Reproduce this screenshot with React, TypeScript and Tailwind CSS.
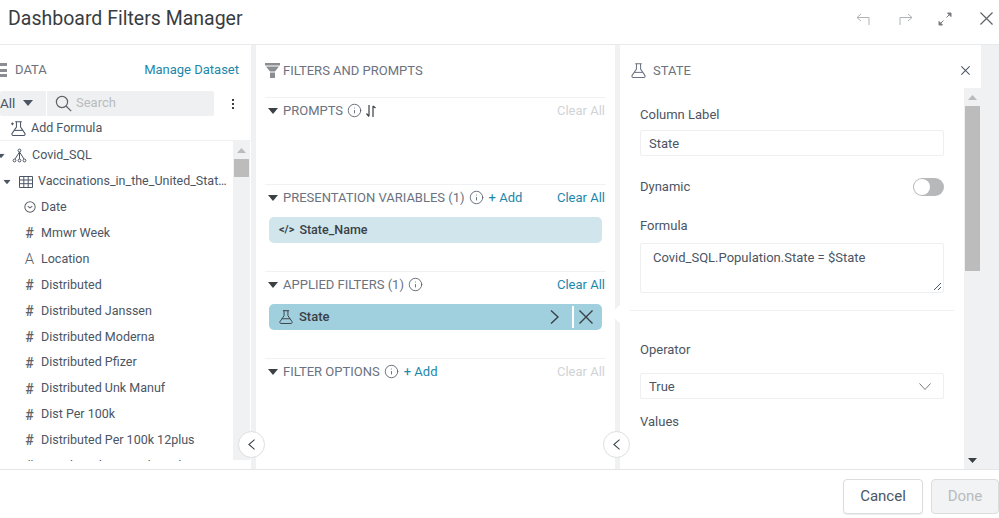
import React from "react";
import { Info } from "lucide-react";

const fields = [
  { kind: "clock", label: "Date" },
  { kind: "hash", label: "Mmwr Week" },
  { kind: "text", label: "Location" },
  { kind: "hash", label: "Distributed" },
  { kind: "hash", label: "Distributed Janssen" },
  { kind: "hash", label: "Distributed Moderna" },
  { kind: "hash", label: "Distributed Pfizer" },
  { kind: "hash", label: "Distributed Unk Manuf" },
  { kind: "hash", label: "Dist Per 100k" },
  { kind: "hash", label: "Distributed Per 100k 12plus" },
  { kind: "hash", label: "Distributed Per 100k 18plus" },
];

const Caret = ({ className = "" }: { className?: string }) => (
  <svg width="10" height="6" viewBox="0 0 10 6" className={className}>
    <path d="M0 0h10L5 6z" fill="currentColor" />
  </svg>
);

const Cross = ({ size, width = 1.2, className = "" }: { size: number; width?: number; className?: string }) => (
  <svg width={size} height={size} viewBox="0 0 14 14" fill="none" stroke="currentColor" strokeWidth={width} className={className}>
    <path d="M.5.5l13 13M13.5.5l-13 13" />
  </svg>
);

const Flask = ({ size = 16, plus = false }: { size?: number; plus?: boolean }) => (
  <svg width={size} height={size} viewBox="0 0 16 16" fill="none" stroke="currentColor" strokeWidth="1.1">
    <path d="M4.5.8h7M5.8.8v5.7L1.2 13.2c-.7 1 0 2.2 1.1 2.2h11.4c1.1 0 1.8-1.2 1.1-2.2L10.2 6.5V.8" />
    <path d="M3.5 10h9" />
    {plus && <path d="M0 3h3M1.5 1.5v3" />}
  </svg>
);

const FieldIcon = ({ kind }: { kind: string }) => {
  if (kind === "clock") {
    return (
      <svg width="12" height="12" viewBox="0 0 13 13" fill="none" stroke="currentColor" strokeWidth="1.1">
        <circle cx="6.5" cy="6.5" r="5.6" />
        <path d="M4 5.5l2.5 2 2.5-2" />
      </svg>
    );
  }
  if (kind === "text") {
    return <span className="text-[15px] font-light leading-none">A</span>;
  }
  return <span className="text-[14px] font-medium leading-none">#</span>;
};

const SectionHeader = ({
  title,
  add,
  clearOn,
  extra,
}: {
  title: string;
  add?: boolean;
  clearOn?: boolean;
  extra?: boolean;
}) => (
  <div className="flex h-[25px] items-center text-[13px] text-[#6b7280]">
    <Caret className="ml-[3px] mr-[5px] text-[#3b4045]" />
    <span className="uppercase">{title}</span>
    <Info size={15} strokeWidth={1.3} className="ml-[4px] text-[#4b5563]" />
    {extra && (
      <svg width="12" height="14" viewBox="0 0 12 14" fill="none" stroke="#3b4045" strokeWidth="1.2" className="ml-[3px]">
        <path d="M4 1v11M1.5 9.5L4 12.5M8 13V2M8 2l2.5 2" />
      </svg>
    )}
    {add && <span className="ml-[5px] text-[#1d87ab]">+ Add</span>}
    <span className={`ml-auto mr-[1px] ${clearOn ? "text-[#1d87ab]" : "text-[#d0d3d6]"}`}>Clear All</span>
  </div>
);

const ScrollArrow = ({ down = false, dark = false }: { down?: boolean; dark?: boolean }) => (
  <div className="flex h-[18px] shrink-0 items-center justify-center">
    <svg width="9" height="5" viewBox="0 0 9 5" className={down ? "rotate-180" : ""}>
      <path d="M0 5h9L4.5 0z" fill={dark ? "#3b4045" : "#b9bcbf"} />
    </svg>
  </div>
);

const Collapse = ({ className }: { className: string }) => (
  <div className={`absolute top-[431px] z-10 flex h-[27px] w-[27px] items-center justify-center rounded-full border border-[#dcdedf] bg-white text-[#3b4045] ${className}`}>
    <svg width="7" height="11" viewBox="0 0 8 12" fill="none" stroke="currentColor" strokeWidth="1.2">
      <path d="M7.5.5L1 6l6.5 5.5" />
    </svg>
  </div>
);

const App = () => {
  return (
    <div className="relative flex h-[518px] w-[999px] flex-col overflow-hidden bg-white font-['Roboto',sans-serif] text-[#4b5563]">
      {/* Header */}
      <div className="flex h-[45px] shrink-0 items-center border-b border-[#e8e9eb] pb-[7px] pl-[8px]">
        <h1 className="text-[19.5px] text-[#383d42]">Dashboard Filters Manager</h1>
        <div className="ml-auto flex items-center text-[#aeb2b6]">
          <svg width="14" height="12" viewBox="0 0 14 12" fill="none" stroke="currentColor" strokeWidth="1" className="mr-[29px]">
            <path d="M5 1L1 4.5 5 8M1 4.5h12V12" />
          </svg>
          <svg width="14" height="12" viewBox="0 0 14 12" fill="none" stroke="currentColor" strokeWidth="1" className="mr-[25px]">
            <path d="M9 1l4 3.5L9 8M13 4.5H1V12" />
          </svg>
          <svg width="14" height="14" viewBox="0 0 14 14" fill="none" stroke="#767b80" strokeWidth="1" className="mr-[28px]">
            <path d="M8.5 5.5L12 2M2 12l3.5-3.5" />
            <path d="M9.5 1H13v3.5zM1 9.5V13h3.5z" fill="#767b80" />
          </svg>
          <Cross size={13} width={1.3} className="mr-[6px] text-[#5e6368]" />
        </div>
      </div>

      {/* Panels */}
      <div className="flex h-[425px] shrink-0 border-b border-[#e4e5e7] bg-[#f0f1f3]">
        {/* Data */}
        <div className="flex w-[251px] shrink-0 flex-col bg-white">
          <div className="flex h-[46px] shrink-0 items-center pr-[12px] pt-[4px]">
            <div className="mr-[8px] flex h-[14px] w-[7px] flex-col justify-between">
              <div className="h-[3px] bg-[#8a8e92]" />
              <div className="h-[3px] bg-[#8a8e92]" />
              <div className="h-[3px] bg-[#8a8e92]" />
            </div>
            <span className="text-[13px] text-[#6b7280]">DATA</span>
            <span className="ml-auto text-[13px] text-[#1d87ab]">Manage Dataset</span>
          </div>
          <div className="flex h-[25px] shrink-0 items-center">
            <div className="flex h-full w-[46px] items-center rounded-l-[2px] bg-[#eef0f1] pb-[1px] text-[13.5px]">
              All
              <Caret className="ml-[8px] text-[#4b5563]" />
            </div>
            <div className="ml-[1px] flex h-full w-[167px] items-center rounded-r-[2px] bg-[#eef0f1] pb-[1px] pl-[8px] text-[13px] text-[#b8bcc0]">
              <svg width="17" height="17" viewBox="0 0 17 17" fill="none" stroke="#5e6368" strokeWidth="1.2" className="mr-[4px]">
                <circle cx="7" cy="7" r="5.6" />
                <path d="M11 11l5.2 5.2" />
              </svg>
              Search
            </div>
            <div className="ml-[18px] flex flex-col gap-[2px]">
              <div className="h-[2px] w-[2px] bg-[#3b4045]" />
              <div className="h-[2px] w-[2px] bg-[#3b4045]" />
              <div className="h-[2px] w-[2px] bg-[#3b4045]" />
            </div>
          </div>
          <div className="flex h-[25px] shrink-0 items-center border-b border-[#f0f1f3] pl-[11px] pt-[1px] text-[12.5px]">
            <Flask size={15} plus />
            <span className="ml-[5px]">Add Formula</span>
          </div>
          <div className="flex h-[320px] shrink-0">
            <div className="h-[320px] w-[233px] overflow-hidden pt-[1.5px] text-[12.5px]">
              <div className="flex h-[26px] items-center">
                <Caret className="-ml-[4px] mr-[6px] scale-75" />
                <svg width="15" height="15" viewBox="0 0 15 15" fill="none" stroke="currentColor" strokeWidth="1">
                  <circle cx="7.5" cy="2.5" r="1.4" />
                  <path d="M7.5 4L3 11M7.5 4l4.5 7M7.5 4v7" />
                  <circle cx="2.5" cy="12.5" r="1.4" />
                  <circle cx="7.5" cy="12.5" r="1.4" />
                  <circle cx="12.5" cy="12.5" r="1.4" />
                </svg>
                <span className="ml-[5px]">Covid_SQL</span>
              </div>
              <div className="flex h-[26px] items-center pl-[2px]">
                <Caret className="mr-[7px] scale-75" />
                <svg width="14" height="12" viewBox="0 0 14 12" fill="none" stroke="currentColor" strokeWidth="1">
                  <path d="M.5.5h13v11H.5zM.5 4h13M.5 7.7h13M4.8.5v11M9.2.5v11" />
                </svg>
                <span className="ml-[5px] w-[189px] truncate">Vaccinations_in_the_United_States</span>
              </div>
              {fields.map((f) => (
                <div key={f.label} className="flex h-[25.9px] items-center pl-[23px]">
                  <div className="flex w-[18px] justify-center pr-[5px] text-[#5e6368]">
                    <FieldIcon kind={f.kind} />
                  </div>
                  <span>{f.label}</span>
                </div>
              ))}
            </div>
            <div className="flex h-[319px] w-[17px] shrink-0 flex-col bg-[#f0f1f3]">
              <ScrollArrow />
              <div className="mx-[1px] h-[18px] bg-[#bcbcbc]" />
            </div>
          </div>
        </div>

        {/* Filters and prompts */}
        <div className="ml-[5px] w-[359px] shrink-0 bg-white px-[9px]">
          <div className="flex h-[52px] items-center pb-[1px] text-[13px] text-[#6b7280]">
            <svg width="15" height="15" viewBox="0 0 15 15" fill="#8a8e92" className="mr-[3px]">
              <path d="M0 0h15v2.5H0zM1 3.5h13L10 8.5H5zM5 9.5h5V15H5z" />
            </svg>
            FILTERS AND PROMPTS
          </div>
          <div className="h-[87px] border-t border-[#f0f1f3]">
            <SectionHeader title="Prompts" extra />
          </div>
          <div className="h-[87px] border-t border-[#f0f1f3]">
            <SectionHeader title="Presentation Variables (1)" add clearOn />
            <div className="ml-[4px] mr-[4px] mt-[7px] flex h-[26px] items-center rounded-[5px] bg-[#d0e5ec] pl-[10px] text-[12.5px] font-medium text-[#3b4045]">
              <span className="mr-[5px] text-[11px] font-bold">&lt;/&gt;</span>
              State_Name
            </div>
          </div>
          <div className="h-[87px] border-t border-[#f0f1f3]">
            <SectionHeader title="Applied Filters (1)" clearOn />
            <div className="ml-[4px] mr-[4px] mt-[7px] flex h-[26px] items-center rounded-[5px] bg-[#a0cfde] pl-[10px] text-[13px] font-medium text-[#3b4045]">
              <Flask size={14} />
              <span className="ml-[6px]">State</span>
              <svg width="9" height="14" viewBox="0 0 9 14" fill="none" stroke="currentColor" strokeWidth="1.4" className="ml-auto">
                <path d="M1 .5L8 7l-7 6.5" />
              </svg>
              <div className="ml-[13px] mr-[5px] h-[22px] w-[2px] bg-white" />
              <Cross size={14} width={1.4} className="mr-[9px]" />
            </div>
          </div>
          <div className="border-t border-[#f0f1f3]">
            <SectionHeader title="Filter Options" add />
          </div>
        </div>

        {/* State */}
        <div className="relative ml-[5px] flex w-[361px] shrink-0 flex-col bg-white">
          <div className="absolute left-[-7px] top-[263px] h-[12px] w-[12px] rotate-45 bg-white" />
          <div className="flex h-[43px] shrink-0 items-center pl-[11px] pr-[11px] pt-[8px] text-[13px] text-[#6b7280]">
            <Flask size={15} />
            <span className="ml-[7px]">STATE</span>
            <Cross size={9} width={1.6} className="ml-auto text-[#4b5563]" />
          </div>
          <div className="flex min-h-0 flex-1">
            <div className="w-[344px] overflow-hidden text-[13px]">
              <div className="px-[20px] pt-[18px]">
                <div className="flex h-[18px] items-center">Column Label</div>
                <div className="mt-[6px] flex h-[26px] items-center rounded-[2px] border border-[#eeeff0] pl-[8px] pt-[1px]">State</div>
                <div className="mt-[21px] flex h-[20px] items-center justify-between">
                  Dynamic
                  <div className="flex h-[18px] w-[31px] items-center rounded-full bg-[#b6b8ba] pl-[1px]">
                    <div className="h-[16px] w-[16px] rounded-full bg-white" />
                  </div>
                </div>
                <div className="mt-[20px] flex h-[18px] items-center">Formula</div>
                <div className="relative mt-[8px] h-[50px] rounded-[2px] border border-[#eeeff0] pl-[12px] pt-[4px]">
                  Covid_SQL.Population.State = $State
                  <svg width="9" height="9" viewBox="0 0 9 9" stroke="#4b5563" strokeWidth="1" className="absolute bottom-[1px] right-[1px]">
                    <path d="M1 8L8 1M5 8L8 5" />
                  </svg>
                </div>
              </div>
              <div className="mx-[10px] mt-[17px] h-px bg-[#f0f1f3]" />
              <div className="px-[20px]">
                <div className="mt-[30px] flex h-[18px] items-center">Operator</div>
                <div className="mt-[14px] flex h-[26px] items-center justify-between rounded-[2px] border border-[#eeeff0] pl-[8px] pr-[12px] pt-[1px]">
                  True
                  <svg width="12" height="7" viewBox="0 0 12 7" fill="none" stroke="#767b80" strokeWidth="1">
                    <path d="M.5.5L6 6.5 11.5.5" />
                  </svg>
                </div>
                <div className="mt-[14px] flex h-[18px] items-center">Values</div>
              </div>
            </div>
            <div className="flex w-[17px] shrink-0 flex-col bg-[#f0f1f3]">
              <ScrollArrow />
              <div className="mx-[1px] h-[165px] bg-[#bcbcbc]" />
              <div className="mt-auto">
                <ScrollArrow down dark />
              </div>
            </div>
          </div>
        </div>
      </div>

      <Collapse className="left-[238px]" />
      <Collapse className="left-[603px]" />

      {/* Footer */}
      <div className="flex flex-1 items-start justify-end pt-[9px]">
        <button className="h-[35px] w-[80px] rounded-[4px] border border-[#dcdcdc] bg-white text-[15px] text-[#4b5563] shadow-[0_1px_1px_rgba(0,0,0,0.08)]">Cancel</button>
        <button className="ml-[8px] h-[35px] w-[68px] rounded-[4px] border border-[#dcdcdc] bg-[#f2f3f4] text-[15px] text-[#b8bbbe]">Done</button>
      </div>
    </div>
  );
};

export default App;
